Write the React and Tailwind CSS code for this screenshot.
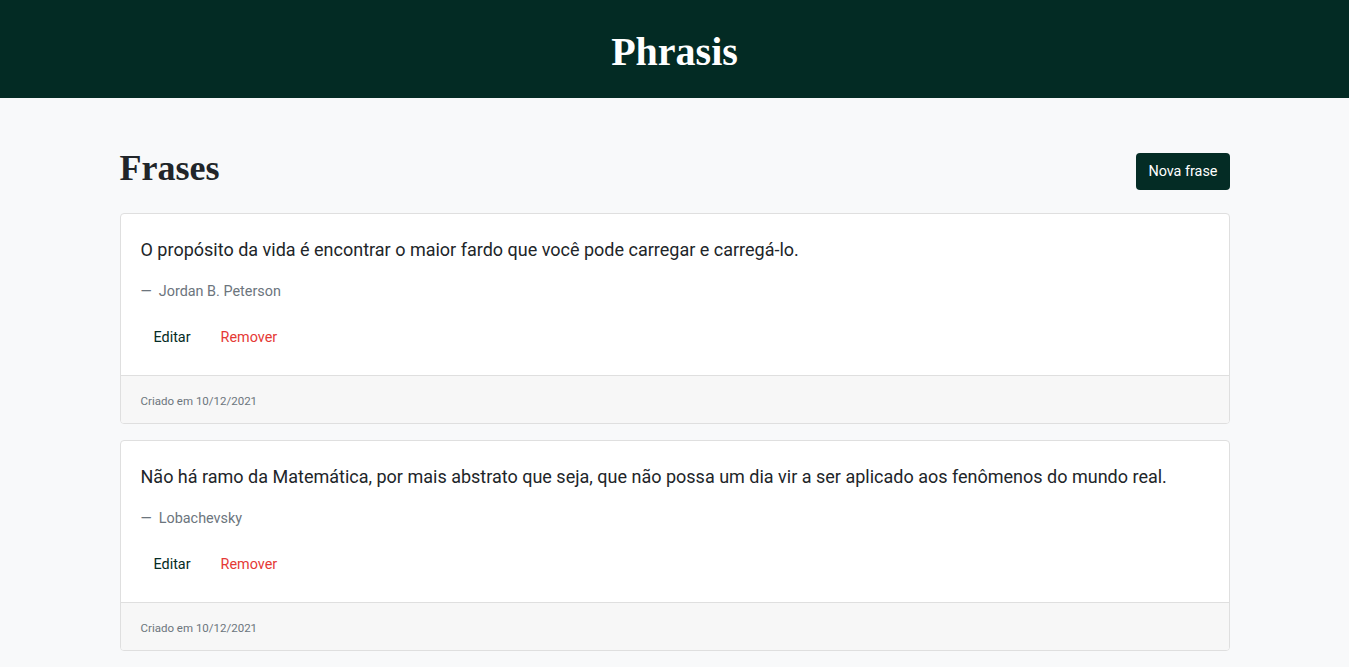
import React from 'react';

const frases = [
  {
    id: 1,
    texto: 'O propósito da vida é encontrar o maior fardo que você pode carregar e carregá-lo.',
    autor: 'Jordan B. Peterson',
    criado: '10/12/2021',
  },
  {
    id: 2,
    texto: 'Não há ramo da Matemática, por mais abstrato que seja, que não possa um dia vir a ser aplicado aos fenômenos do mundo real.',
    autor: 'Lobachevsky',
    criado: '10/12/2021',
  },
];

const FraseCard = ({ frase }) => (
  <div className="mb-4 bg-white border border-[#dfdfdf] rounded overflow-hidden">
    <div className="pt-[22px] pl-5 pr-5 pb-[18px]">
      <p className="text-[18px] leading-[27px] text-[#212529]">{frase.texto}</p>
      <p className="mt-[18px] text-[14.4px] leading-[21px] text-[#6c757d]">
        <span className="mr-[7px]">—</span>{frase.autor}
      </p>
      <div className="mt-[17px] flex gap-[6px]">
        <button className="pl-[13px] pr-3 py-2 text-[14.4px] leading-[22px] text-[#042c25]">Editar</button>
        <button className="px-3 py-2 text-[14.4px] leading-[22px] text-[#e53935]">Remover</button>
      </div>
    </div>
    <div className="border-t border-[#dfdfdf] bg-[#f7f7f7] px-5 pt-[16px] pb-[13px]">
      <p className="text-[11.5px] leading-[18px] text-[#6c757d]">Criado em {frase.criado}</p>
    </div>
  </div>
);

const App = () => {
  return (
    <div className="min-h-screen bg-[#f8f9fa] font-['Roboto',sans-serif]">
      <header className="h-[98px] bg-[#032b24] flex items-center justify-center">
        <h1 className="font-['Liberation_Serif','Times_New_Roman',serif] font-bold text-[40px] leading-none text-white pt-[6px]">
          Phrasis
        </h1>
      </header>

      <main className="w-[1110px] mx-auto pt-[55px]">
        <div className="flex items-center justify-between h-[37px] mb-[23px]">
          <h2 className="font-['Liberation_Serif','Times_New_Roman',serif] font-bold text-[36px] leading-none text-[#212529] -mt-[7px]">
            Frases
          </h2>
          <button className="h-[37px] px-3 rounded bg-[#042c25] text-white text-[14.4px]">
            Nova frase
          </button>
        </div>

        {frases.map((frase) => (
          <FraseCard key={frase.id} frase={frase} />
        ))}
      </main>
    </div>
  );
};

export default App;
